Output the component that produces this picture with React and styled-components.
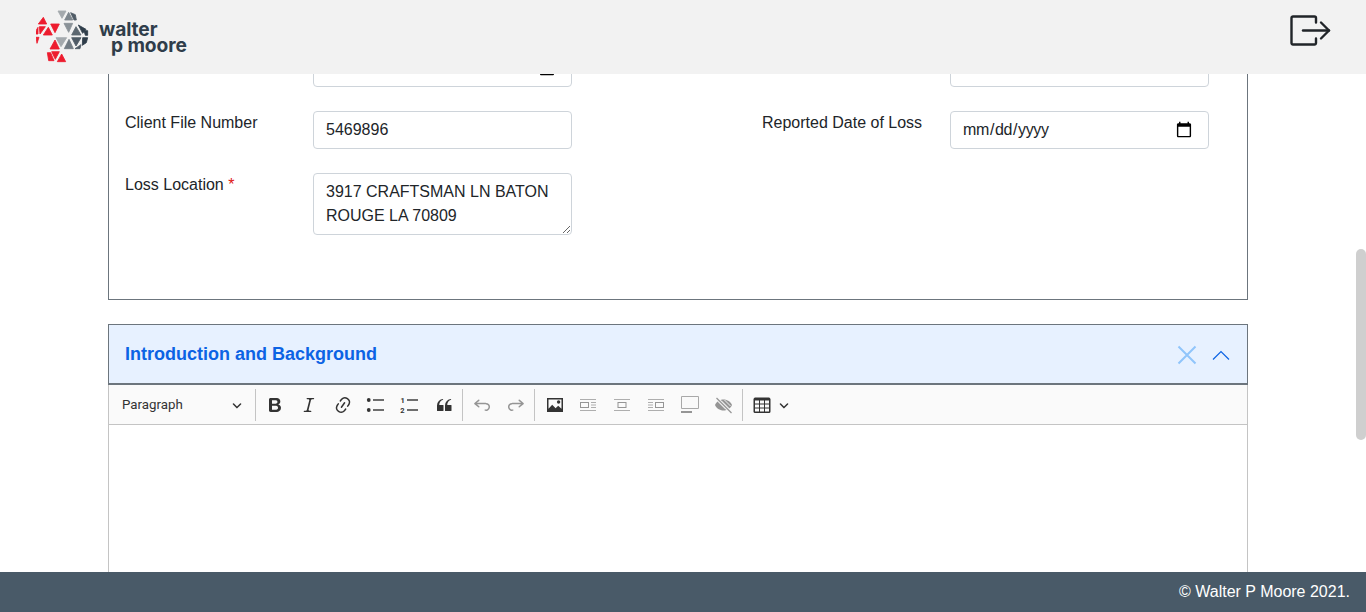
import React from "react";
import styled, { createGlobalStyle } from "styled-components";

const GlobalStyle = createGlobalStyle`
  html, body {
    margin: 0;
    height: 100%;
    overflow: hidden;
    background: #fff;
    font-family: "Liberation Sans", Arial, sans-serif;
    color: #212529;
  }
  * { box-sizing: border-box; }
`;

const Page = styled.div`
  display: flex;
  flex-direction: column;
  height: 612px;
`;

const Header = styled.header`
  flex: 0 0 74px;
  display: flex;
  align-items: flex-start;
  justify-content: space-between;
  padding: 10px 36px 0;
  background: #f2f2f2;
  position: relative;
  z-index: 2;
`;

const Brand = styled.div`
  display: flex;
  align-items: center;
  gap: 9px;
`;

const Wordmark = styled.div`
  display: flex;
  flex-direction: column;
  font-family: Inter, "Open Sans", sans-serif;
  font-weight: 700;
  font-size: 19.2px;
  line-height: 15.5px;
  letter-spacing: -0.1px;
  color: #2f3d4a;
  margin-top: 2px;
`;

const WordmarkLine = styled.span`
  padding-left: ${(p) => p.$indent || 0}px;
`;

const LogoutButton = styled.button`
  display: flex;
  padding: 0;
  margin: 5px -1px 0 0;
  border: 0;
  background: none;
  color: #212529;
`;

const Body = styled.div`
  flex: 1;
  min-height: 0;
  display: flex;
`;

const Main = styled.main`
  flex: 1;
  min-width: 0;
  overflow: hidden;
  display: flex;
  flex-direction: column;
  align-items: center;
`;

const ScrollTrack = styled.div`
  flex: 0 0 10px;
  padding-top: 175px;
`;

const ScrollThumb = styled.div`
  height: 191px;
  border-radius: 5px;
  background: #cfcfcf;
`;

const Content = styled.div`
  width: 1140px;
  flex: 0 0 auto;
  margin-top: -26px;
`;

const FormCard = styled.section`
  border: 1px solid #6c757d;
  padding: 0 0 64px 16px;
  display: grid;
  grid-template-columns: 188px 259px 190px 188px 259px;
  row-gap: 24px;
  align-items: start;
`;

const FieldLabel = styled.label`
  font-size: 16px;
  line-height: 24px;
  color: #212529;
  white-space: nowrap;
`;

const Required = styled.span`
  color: #e01414;
`;

const Spacer = styled.div``;

const TextInput = styled.input`
  display: block;
  width: 100%;
  height: 38px;
  padding: 6px 12px;
  border: 1px solid #ced4da;
  border-radius: 4px;
  background: #fff;
  font: 16px/24px "Liberation Sans", Arial, sans-serif;
  color: #212529;
  outline: none;

  &::-webkit-datetime-edit {
    margin-left: -1px;
    letter-spacing: -0.38px;
  }

  &::-webkit-calendar-picker-indicator {
    width: 18px;
    height: 18px;
    padding: 0;
    margin: 0 3px 0 0;
  }
`;

const TextArea = styled.textarea`
  display: block;
  width: 100%;
  height: 62px;
  padding: 6px 12px;
  border: 1px solid #ced4da;
  border-radius: 4px;
  background: #fff;
  font: 16px/24px "Liberation Sans", Arial, sans-serif;
  color: #212529;
  outline: none;
  resize: vertical;
  overflow: hidden;
`;

const Section = styled.section`
  margin-top: 24px;
`;

const SectionHeader = styled.div`
  height: 61px;
  display: flex;
  align-items: center;
  padding: 0 17px 0 16px;
  border: 1px solid #6c757d;
  border-bottom-width: 2px;
  background: #e7f1ff;
`;

const SectionTitle = styled.h2`
  flex: 1;
  margin: 0;
  font-size: 18px;
  line-height: 24px;
  font-weight: 700;
  color: #0c63e4;
`;

const HeaderActions = styled.div`
  display: flex;
  align-items: center;
  gap: 15px;
  padding-top: 2px;
  color: #0c63e4;
`;

const Editor = styled.div`
  border: 1px solid #c4c4c4;
  border-top: 0;
  height: 320px;
`;

const Toolbar = styled.div`
  height: 40px;
  display: flex;
  align-items: center;
  background: #fafafa;
  border-bottom: 1px solid #c4c4c4;
`;

const HeadingDropdown = styled.div`
  flex: 0 0 144.5px;
  height: 100%;
  display: flex;
  align-items: center;
  justify-content: space-between;
  padding: 0 12px 0 13px;
  font-family: Roboto, "Liberation Sans", sans-serif;
  font-size: 13.3px;
  color: #333;
`;

const ToolSeparator = styled.span`
  flex: 0 0 1px;
  height: 32px;
  margin: 0 2.3px 0 1.3px;
  background: #c4c4c4;
`;

const ToolButton = styled.span`
  flex: 0 0 33.8px;
  display: flex;
  align-items: center;
  justify-content: center;
  color: #333;
  opacity: ${(p) => (p.$disabled ? 0.5 : 1)};
`;

const TableButton = styled.span`
  flex: 0 0 48px;
  display: flex;
  align-items: center;
  gap: 7px;
  padding-left: 7px;
  color: #333;
`;

const Footer = styled.footer`
  flex: 0 0 40px;
  display: flex;
  align-items: center;
  justify-content: flex-end;
  padding: 0 16px;
  background: #495a68;
  color: #fff;
  font-size: 16px;
  position: relative;
  z-index: 2;
`;

const Ico = ({ children }) => (
  <svg width="20" height="20" viewBox="0 0 20 20" fill="currentColor">
    {children}
  </svg>
);

const DropArrow = () => (
  <svg width="10" height="10" viewBox="0 0 10 10" fill="currentColor">
    <path d="M.941 4.523a.75.75 0 1 1 1.06-1.06l3.006 3.005 3.005-3.005a.75.75 0 1 1 1.06 1.06l-3.549 3.55a.75.75 0 0 1-1.168-.136L.941 4.523z" />
  </svg>
);

const red = "#ed1c2e";
const LOGO_TRIANGLES = [
  ["130,52 115,72 140,72", red],
  ["118,80 136,80 120,102", red],
  ["108,92 114,82 114,102 108,102", red],
  ["152,72 178,72 165,98", red],
  ["145,82 130,105 157,105", red],
  ["108,112 117,112 111,130", red],
  ["165,120 150,147 178,147", red],
  ["155,155 178,155 166,178", red],
  ["142,158 152,158 162,182 146,182", red],
  ["185,162 172,185 197,185", red],
  ["174,33 198,33 186,55", "#a4a9ad"],
  ["206,37 218,60 194,60", "#7d868d"],
  ["212,38 226,44 229,60 222,60", "#4f5b66"],
  ["192,70 218,70 206,97", "#8a9298"],
  ["228,80 215,105 243,105", "#5c6770"],
  ["235,75 258,88 248,100", "#2f3d4a"],
  ["252,92 263,92 263,106 256,106", "#2f3d4a"],
  ["168,113 200,113 183,140", "#a4a9ad"],
  ["207,118 193,146 220,146", "#727c84"],
  ["215,113 243,113 228,138", "#4f5b66"],
  ["248,113 263,113 259,128 247,136", "#2f3d4a"],
  ["225,146 240,146 243,134", "#4f5b66"],
];

const LogoMark = () => (
  <svg width="54" height="53" viewBox="108 30 162 159">
    {LOGO_TRIANGLES.map(([points, fill]) => (
      <polygon key={points} points={points} fill={fill} stroke={fill} strokeWidth="2.5" strokeLinejoin="round" />
    ))}
  </svg>
);

const LogoutIcon = () => (
  <svg width="41" height="31" viewBox="0 0 41 31" fill="none" stroke="currentColor" strokeWidth="2.4" strokeLinecap="round" strokeLinejoin="round">
    <path d="M26 7.500V3a1.500 1.500 0 0 0-1.500-1.500h-21.500a1.500 1.500 0 0 0-1.500 1.500v25a1.500 1.500 0 0 0 1.500 1.500h21.500a1.500 1.500 0 0 0 1.500-1.500V23.500" />
    <path d="M13 15.500h26" />
    <path d="M31 7.500l8 8-8 8" />
  </svg>
);

const imageLines = (
  <g>
    <rect x="2" y="4" width="16" height="1" opacity=".75" />
    <rect x="2" y="15" width="16" height="1" opacity=".75" />
  </g>
);

const BoxFrame = ({ x }) => (
  <path fillRule="evenodd" d={`M${x} 7h9v6h-9zM${x + 1} 8v4h7V8z`} />
);

export default function App() {
  return (
    <>
      <GlobalStyle />
      <Page>
        <Header>
          <Brand>
            <LogoMark />
            <Wordmark>
              <WordmarkLine>walter</WordmarkLine>
              <WordmarkLine $indent={12}>p moore</WordmarkLine>
            </Wordmark>
          </Brand>
          <LogoutButton aria-label="Log out">
            <LogoutIcon />
          </LogoutButton>
        </Header>
        <Body>
          <Main>
            <Content>
              <FormCard>
                <FieldLabel />
                <TextInput type="date" defaultValue="2021-06-14" />
                <Spacer />
                <FieldLabel />
                <TextInput />

                <FieldLabel>Client File Number</FieldLabel>
                <TextInput defaultValue="5469896" />
                <Spacer />
                <FieldLabel>Reported Date of Loss</FieldLabel>
                <TextInput type="date" />

                <FieldLabel>
                  Loss Location <Required>*</Required>
                </FieldLabel>
                <TextArea defaultValue="3917 CRAFTSMAN LN BATON ROUGE LA 70809" />
              </FormCard>

              <Section>
                <SectionHeader>
                  <SectionTitle>Introduction and Background</SectionTitle>
                  <HeaderActions>
                    <svg width="20" height="20" viewBox="0 0 20 20" stroke="#90c5fb" strokeWidth="2" fill="none">
                      <path d="M1.500 1.500l17 17M18.500 1.500l-17 17" />
                    </svg>
                    <svg width="18" height="10" viewBox="0 0 18 10" stroke="currentColor" strokeWidth="1.2" fill="none">
                      <path d="M1 9.500l8-8 8 8" />
                    </svg>
                  </HeaderActions>
                </SectionHeader>
                <Editor>
                  <Toolbar>
                    <HeadingDropdown>
                      Paragraph
                      <DropArrow />
                    </HeadingDropdown>
                    <ToolSeparator />
                    <ToolButton>
                      <Ico>
                        <path d="M10.187 17H5.773c-.637 0-1.092-.138-1.364-.415-.273-.277-.409-.718-.409-1.323V4.738c0-.617.14-1.062.419-1.332.279-.27.73-.406 1.354-.406h4.68c.69 0 1.288.041 1.793.124.506.083.96.242 1.36.478.341.197.644.447.906.75a3.26 3.26 0 0 1 .808 2.162c0 1.401-.722 2.426-2.167 3.075C15.05 10.175 16 11.315 16 13.01a3.756 3.756 0 0 1-2.296 3.504 6.1 6.1 0 0 1-1.517.377c-.571.073-1.238.11-2 .11zm-.217-6.217H7v4.087h3.069c1.977 0 2.965-.69 2.965-2.072 0-.707-.256-1.22-.768-1.537-.512-.319-1.277-.478-2.296-.478zM7 5.130v3.619h2.606c.729 0 1.292-.067 1.690-.2a1.600 1.600 0 0 0 .91-.765c.165-.267.247-.566.247-.897 0-.707-.26-1.176-.778-1.409-.519-.232-1.310-.348-2.375-.348H7z" />
                      </Ico>
                    </ToolButton>
                    <ToolButton>
                      <Ico>
                        <path d="m9.586 14.633.021.004c-.036.335.095.655.393.962.082.083.173.15.274.201h1.474a.6.6 0 1 1 0 1.200H5.304a.6.6 0 0 1 0-1.200h1.150c.474-.07.809-.182 1.005-.334.157-.122.291-.32.404-.597l2.416-9.550a1.053 1.053 0 0 0-.281-.823 1.120 1.120 0 0 0-.442-.296H8.150a.6.6 0 0 1 0-1.200h6.443a.6.6 0 1 1 0 1.200h-1.195c-.376.056-.65.155-.823.296-.215.175-.423.439-.623.79l-2.366 9.347z" />
                      </Ico>
                    </ToolButton>
                    <ToolButton>
                      <Ico>
                        <path d="m11.077 15 .991-1.416a.75.75 0 1 1 1.229.86l-1.148 1.640a.748.748 0 0 1-.217.206 5.251 5.251 0 0 1-8.503-5.955.741.741 0 0 1 .12-.274l1.147-1.639a.75.75 0 1 1 1.228.86L4.933 10.700l.006.003a3.750 3.750 0 0 0 6.132 4.294l.006.004zm5.494-5.335a.748.748 0 0 1-.12.274l-1.147 1.639a.75.75 0 1 1-1.228-.86l.86-1.230a3.750 3.750 0 0 0-6.144-4.301l-.86 1.229a.75.75 0 0 1-1.229-.86l1.148-1.640a.748.748 0 0 1 .217-.206 5.251 5.251 0 0 1 8.503 5.955zm-4.563-2.532a.75.75 0 0 1 .184 1.045l-3.155 4.505a.75.75 0 1 1-1.229-.86l3.155-4.506a.75.75 0 0 1 1.045-.184z" />
                      </Ico>
                    </ToolButton>
                    <ToolButton>
                      <Ico>
                        <circle cx="2.750" cy="5" r="1.900" />
                        <circle cx="2.750" cy="15" r="1.900" />
                        <rect x="7" y="4.300" width="11" height="1.400" />
                        <rect x="7" y="14.300" width="11" height="1.400" />
                      </Ico>
                    </ToolButton>
                    <ToolButton>
                      <Ico>
                        <rect x="7" y="4.300" width="11" height="1.400" />
                        <rect x="7" y="14.300" width="11" height="1.400" />
                        <text x="0.600" y="8" fontSize="7.500" fontWeight="700" fontFamily="Roboto, sans-serif">1</text>
                        <text x="0.200" y="18" fontSize="7.500" fontWeight="700" fontFamily="Roboto, sans-serif">2</text>
                      </Ico>
                    </ToolButton>
                    <ToolButton>
                      <Ico>
                        <path d="M3 10.423a6.500 6.500 0 0 1 6.056-6.408l.038.67C6.448 5.423 5.354 7.663 5.220 10H9c.552 0 .5.432.5.986v4.511c0 .554-.448.503-1 .503h-5c-.552 0-.5-.449-.5-1.003v-4.574zm8 0a6.500 6.500 0 0 1 6.056-6.408l.038.67c-2.646.739-3.740 2.979-3.873 5.315H17c.552 0 .5.432.5.986v4.511c0 .554-.448.503-1 .503h-5c-.552 0-.5-.449-.5-1.003v-4.574z" />
                      </Ico>
                    </ToolButton>
                    <ToolSeparator />
                    <ToolButton $disabled>
                      <Ico>
                        <path d="m5.042 9.367 2.189 1.837a.75.75 0 0 1-.965 1.149l-3.788-3.180a.747.747 0 0 1-.21-.284.75.75 0 0 1 .17-.945L6.230 4.762a.75.75 0 1 1 .964 1.150L4.863 7.866h8.917A.75.75 0 0 1 14 7.900a4 4 0 1 1-1.477 7.718l.344-1.489a2.500 2.500 0 1 0 1.094-4.730l.008-.032H5.042z" />
                      </Ico>
                    </ToolButton>
                    <ToolButton $disabled>
                      <Ico>
                        <path d="m14.958 9.367-2.189 1.837a.75.75 0 0 0 .965 1.149l3.788-3.180a.747.747 0 0 0 .21-.284.75.75 0 0 0-.17-.945L13.770 4.762a.75.75 0 1 0-.964 1.150l2.331 1.955H6.220A.75.75 0 0 0 6 7.900a4 4 0 1 0 1.477 7.718l-.344-1.489A2.500 2.500 0 1 1 6.039 9.400l-.008-.032h8.927z" />
                      </Ico>
                    </ToolButton>
                    <ToolSeparator />
                    <ToolButton>
                      <Ico>
                        <path fillRule="evenodd" d="M2 3h16v14H2zM3.500 4.500v9.300l3.700-4 3.400 3.400 2.600-2.400 3.300 3V4.500z" />
                        <circle cx="13.600" cy="7" r="1.700" />
                      </Ico>
                    </ToolButton>
                    <ToolButton $disabled>
                      <Ico>
                        {imageLines}
                        <BoxFrame x={2} />
                        <path d="M13 7h5v1h-5zM13 9.500h5v1h-5zM13 12h5v1h-5z" opacity=".75" />
                      </Ico>
                    </ToolButton>
                    <ToolButton $disabled>
                      <Ico>
                        {imageLines}
                        <BoxFrame x={5.500} />
                      </Ico>
                    </ToolButton>
                    <ToolButton $disabled>
                      <Ico>
                        {imageLines}
                        <BoxFrame x={9} />
                        <path d="M2 7h5v1H2zM2 9.500h5v1H2zM2 12h5v1H2z" opacity=".75" />
                      </Ico>
                    </ToolButton>
                    <ToolButton $disabled>
                      <Ico>
                        <path fillRule="evenodd" d="M2 1h16a1 1 0 0 1 1 1v11a1 1 0 0 1-1 1H2a1 1 0 0 1-1-1V2a1 1 0 0 1 1-1zm0 1v11h16V2z" opacity=".8" />
                        <rect x="1" y="16" width="11" height="2" />
                      </Ico>
                    </ToolButton>
                    <ToolButton $disabled>
                      <Ico>
                        <path d="M9.500 4.500c4 0 7 2.300 8.500 5.500-1.500 3.200-4.500 5.500-8.500 5.500S2.500 13.200 1 10c1.500-3.200 4.500-5.500 8.500-5.500z" />
                        <path d="M4 6.500l8 8M7 5.500l8.500 8.500M10.500 5l6 6" stroke="#fafafa" strokeWidth=".9" />
                        <path d="M2.500 3l15 15" stroke="#fafafa" strokeWidth="2.600" />
                        <path d="M2.500 3l15 15" stroke="currentColor" strokeWidth="1.200" />
                      </Ico>
                    </ToolButton>
                    <ToolSeparator />
                    <TableButton>
                      <Ico>
                        <path d="M3 5.500v3h4v-3H3zm0 4v3h4v-3H3zm0 4v3h4v-3H3zm5 3h4v-3H8v3zm5 0h4v-3h-4v3zm4-4v-3h-4v3h4zm0-4v-3h-4v3h4zm1.500 8a1.500 1.500 0 0 1-1.500 1.500H3A1.500 1.500 0 0 1 1.500 17V4c.222-.863 1.068-1.500 2-1.500h13c.932 0 1.778.637 2 1.500v13zM12 8.500v-3H8v3h4zm0 4v-3H8v3h4z" />
                      </Ico>
                      <DropArrow />
                    </TableButton>
                  </Toolbar>
                </Editor>
              </Section>
            </Content>
          </Main>
          <ScrollTrack>
            <ScrollThumb />
          </ScrollTrack>
        </Body>
        <Footer>© Walter P Moore 2021.</Footer>
      </Page>
    </>
  );
}
